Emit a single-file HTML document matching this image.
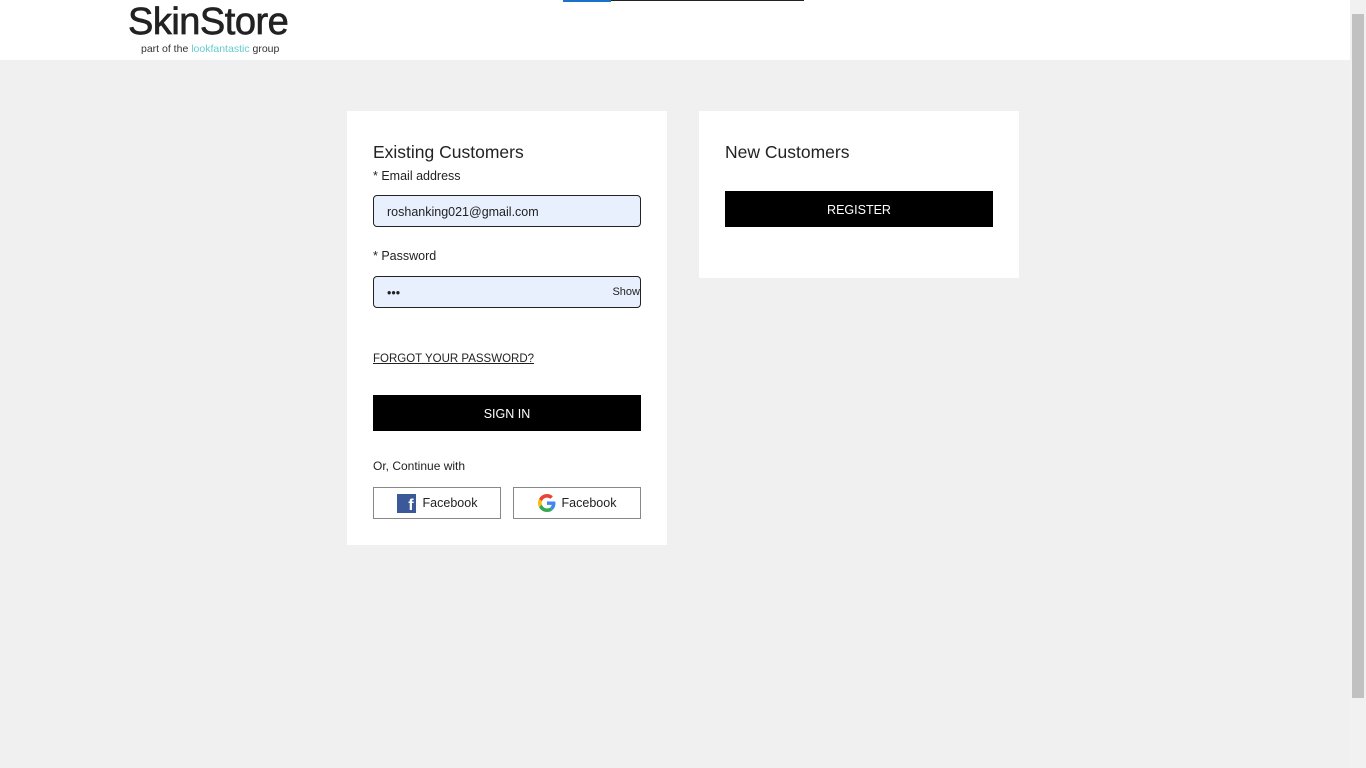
<!DOCTYPE html>
<html><head><style>
*{box-sizing:border-box;margin:0;padding:0}
body{width:1366px;height:768px;background:#f0f0f0;font-family:"Liberation Sans",sans-serif;color:#222;position:relative;overflow:hidden}
.hdr{position:absolute;left:0;top:0;width:1350px;height:60px;background:#fff}
.logo{position:absolute;left:128px;top:1px;font-size:38px;letter-spacing:-0.5px;color:#222;-webkit-text-stroke:0.7px #222}
.sub{position:absolute;left:141px;top:43px;font-size:10.5px;color:#333}
.bar1{position:absolute;left:563px;top:0;width:48px;height:2px;background:#1a73c8}
.bar2{position:absolute;left:611px;top:0;width:193px;height:1px;background:#222}
.sb{position:absolute;left:1350px;top:0;width:16px;height:768px;background:#f1f1f1}
.thumb{position:absolute;left:2px;top:14px;width:12px;height:684px;background:#c1c1c1}
.card{position:absolute;background:#fff}
h2{position:absolute;font-size:17.5px;font-weight:normal;color:#222}
.lbl{position:absolute;font-size:12.5px;color:#222}
.inp{position:absolute;left:26px;width:268px;height:32px;border:1px solid #222;border-radius:4px;background:#e8f0fe;font-size:12.5px;padding:9px 13px}
.btn{position:absolute;background:#000;color:#fff;font-size:12.5px;text-align:center;line-height:38px}
.sbtn{position:absolute;top:376px;width:128px;height:32px;border:1px solid #888;font-size:12.5px;display:flex;align-items:center;justify-content:center}
</style></head><body>
<div class="hdr"><div class="logo">SkinStore</div><div class="sub">part of the <span style="color:#6cc">lookfantastic</span> group</div><div class="bar1"></div><div class="bar2"></div></div>
<div class="sb"><div class="thumb"></div></div>
<div class="card" style="left:347px;top:111px;width:320px;height:434px">
<h2 style="left:26px;top:31px">Existing Customers</h2>
<div class="lbl" style="left:26px;top:58px">* Email address</div>
<div class="inp" style="top:84px">roshanking021@gmail.com</div>
<div class="lbl" style="left:26px;top:138px">* Password</div>
<div class="inp" style="top:165px">•••<span style="position:absolute;right:0;top:9px;font-size:11px">Show</span></div>
<div class="lbl" style="left:26px;top:242px;font-size:11.5px;text-decoration:underline">FORGOT YOUR PASSWORD?</div>
<div class="btn" style="left:26px;top:284px;width:268px;height:36px">SIGN IN</div>
<div class="lbl" style="left:26px;top:348px;font-size:12px">Or, Continue with</div>
<div class="sbtn" style="left:26px"><span style="display:inline-block;width:19px;height:19px;background:#3b5998;color:#fff;font-weight:bold;font-size:16px;line-height:23px;text-align:right;padding-right:2px;margin-right:7px">f</span>Facebook</div>
<div class="sbtn" style="left:166px"><svg width="18" height="18" viewBox="0 0 48 48" style="margin-right:6px"><path fill="#EA4335" d="M24 9.5c3.5 0 6.6 1.2 9 3.5l6.7-6.7C35.6 2.4 30.2 0 24 0 14.6 0 6.6 5.4 2.7 13.3l7.8 6C12.4 13.7 17.7 9.5 24 9.5z"/><path fill="#4285F4" d="M46.5 24.5c0-1.6-.1-3.1-.4-4.5H24v9h12.7c-.6 2.9-2.200 5.4-4.7 7.1l7.6 5.9c4.4-4.1 6.9-10.1 6.9-17.5z"/><path fill="#FBBC05" d="M10.5 28.7c-.5-1.5-.8-3-.8-4.7s.3-3.2.8-4.7l-7.8-6C1 16.6 0 20.2 0 24s1 7.4 2.7 10.7l7.8-6z"/><path fill="#34A853" d="M24 48c6.5 0 11.9-2.1 15.6-5.8L32 36.3c-2.1 1.4-4.8 2.3-8 2.3-6.3 0-11.6-4.2-13.5-9.9l-7.8 6C6.6 42.6 14.6 48 24 48z"/></svg>Facebook</div>
</div>
<div class="card" style="left:699px;top:111px;width:320px;height:167px">
<h2 style="left:26px;top:31px">New Customers</h2>
<div class="btn" style="left:26px;top:80px;width:268px;height:36px">REGISTER</div>
</div>
</body></html>
